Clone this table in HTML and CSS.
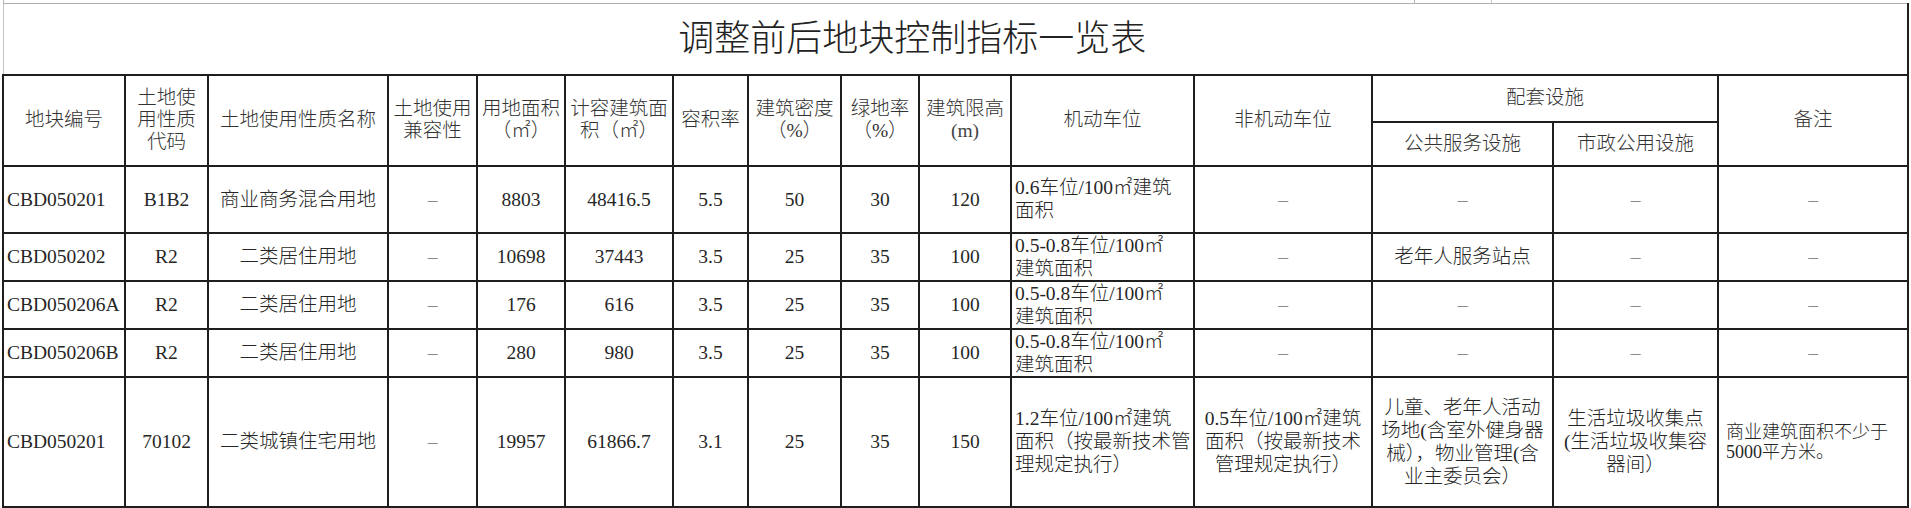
FILE: index.html
```html
<!DOCTYPE html>
<html lang="zh-CN">
<head>
<meta charset="utf-8">
<title>调整前后地块控制指标一览表</title>
<link rel="stylesheet" href="styles.css">
</head>
<body>
<div class="sheet">
  <div class="prev-strip">
    <span class="ps ps-a"></span><span class="ps ps-b"></span><span class="ps ps-c"></span>
  </div>
  <table class="grid">
    <colgroup>
      <col class="c-id"><col class="c-code"><col class="c-name"><col class="c-comp"><col class="c-area">
      <col class="c-gfa"><col class="c-far"><col class="c-dens"><col class="c-green"><col class="c-height">
      <col class="c-park"><col class="c-bike"><col class="c-pub"><col class="c-mun"><col class="c-note">
    </colgroup>
    <tr class="r-title">
      <td colspan="15" class="title">调整前后地块控制指标一览表</td>
    </tr>
    <tr class="r-h1">
      <th rowspan="2">地块编号</th>
      <th rowspan="2">土地使<br>用性质<br>代码</th>
      <th rowspan="2">土地使用性质名称</th>
      <th rowspan="2">土地使用<br>兼容性</th>
      <th rowspan="2">用地面积<br>（㎡）</th>
      <th rowspan="2">计容建筑面<br>积（㎡）</th>
      <th rowspan="2">容积率</th>
      <th rowspan="2">建筑密度<br>（%）</th>
      <th rowspan="2">绿地率<br>（%）</th>
      <th rowspan="2">建筑限高<br><span class="unit">(m)</span></th>
      <th rowspan="2">机动车位</th>
      <th rowspan="2">非机动车位</th>
      <th colspan="2">配套设施</th>
      <th rowspan="2">备注</th>
    </tr>
    <tr class="r-h2">
      <th>公共服务设施</th>
      <th>市政公用设施</th>
    </tr>
    <tr class="r-d1">
      <td class="left">CBD050201</td><td>B1B2</td><td>商业商务混合用地</td><td class="na">–</td><td>8803</td>
      <td>48416.5</td><td>5.5</td><td>50</td><td>30</td><td>120</td>
      <td class="left">0.6车位/100㎡建筑<br>面积</td><td class="na">–</td><td class="na">–</td><td class="na">–</td><td class="na">–</td>
    </tr>
    <tr class="r-d2">
      <td class="left">CBD050202</td><td>R2</td><td>二类居住用地</td><td class="na">–</td><td>10698</td>
      <td>37443</td><td>3.5</td><td>25</td><td>35</td><td>100</td>
      <td class="left">0.5-0.8车位/100㎡<br>建筑面积</td><td class="na">–</td><td>老年人服务站点</td><td class="na">–</td><td class="na">–</td>
    </tr>
    <tr class="r-d3">
      <td class="left">CBD050206A</td><td>R2</td><td>二类居住用地</td><td class="na">–</td><td>176</td>
      <td>616</td><td>3.5</td><td>25</td><td>35</td><td>100</td>
      <td class="left">0.5-0.8车位/100㎡<br>建筑面积</td><td class="na">–</td><td class="na">–</td><td class="na">–</td><td class="na">–</td>
    </tr>
    <tr class="r-d4">
      <td class="left">CBD050206B</td><td>R2</td><td>二类居住用地</td><td class="na">–</td><td>280</td>
      <td>980</td><td>3.5</td><td>25</td><td>35</td><td>100</td>
      <td class="left">0.5-0.8车位/100㎡<br>建筑面积</td><td class="na">–</td><td class="na">–</td><td class="na">–</td><td class="na">–</td>
    </tr>
    <tr class="r-d5">
      <td class="left">CBD050201</td><td>70102</td><td>二类城镇住宅用地</td><td class="na">–</td><td>19957</td>
      <td>61866.7</td><td>3.1</td><td>25</td><td>35</td><td>150</td>
      <td class="left">1.2车位/100㎡建筑<br>面积（按最新技术管<br>理规定执行）</td>
      <td>0.5车位/100㎡建筑<br>面积（按最新技术<br>管理规定执行）</td>
      <td>儿童、老年人活动<br>场地(含室外健身器<br>械），物业管理(含<br>业主委员会）</td>
      <td>生活垃圾收集点<br>(生活垃圾收集容<br>器间）</td>
      <td class="left note">商业建筑面积不少于<br>5000平方米。</td>
    </tr>
  </table>
</div>
</body>
</html>
```
FILE: styles.css
```css
html, body {
  margin: 0;
  padding: 0;
  background: #ffffff;
}

.sheet {
  width: 1911px;
  padding-left: 2px;
  box-sizing: border-box;
}

.prev-strip {
  display: flex;
  height: 3px;
}

.ps {
  display: block;
  height: 3px;
  border-left: 1px solid #b5b5b5;
}

.ps-a { width: 1410px; margin-left: 1px; }
.ps-b { width: 76px; }
.ps-c { flex: 1; border-left-color: #c8c8c8; }

.grid {
  border-collapse: collapse;
  table-layout: fixed;
  width: 1907px;
  font-family: "Liberation Serif", "Noto Sans CJK SC", serif;
  font-size: 19.5px;
  color: #262626;
}

.c-id { width: 122px; }
.c-code { width: 83px; }
.c-name { width: 180px; }
.c-comp { width: 89px; }
.c-area { width: 88px; }
.c-gfa { width: 108px; }
.c-far { width: 75px; }
.c-dens { width: 93px; }
.c-green { width: 78px; }
.c-height { width: 92px; }
.c-park { width: 183px; }
.c-bike { width: 178px; }
.c-pub { width: 181px; }
.c-mun { width: 165px; }
.c-note { width: 190px; }

.grid td,
.grid th {
  border: 2px solid #1e1e1e;
  padding: 0 2px;
  text-align: center;
  vertical-align: middle;
  font-weight: 300;
  line-height: 23px;
  white-space: nowrap;
  overflow: hidden;
}

.grid th {
  color: #333333;
  padding: 0;
  line-height: 22px;
}

.unit {
  font-weight: 400;
  color: #444444;
}

.grid td.title {
  font-size: 36px;
  line-height: 40px;
  color: #222222;
  padding: 0 86px 0 0;
  border-top: 1px solid #b0b0b0;
  border-left: 1px solid #c4c4c4;
}

.grid td.left {
  text-align: left;
  padding-left: 3px;
}

.grid td.na {
  color: #8a8a8a;
}

.grid td.note {
  font-size: 18px;
  line-height: 20px;
  padding-left: 7px;
}

.r-title { height: 71px; }
.r-h1 { height: 47px; }
.r-h2 { height: 44px; }
.r-d1 { height: 67px; }
.r-d2 { height: 46px; }
.r-d3 { height: 46px; }
.r-d4 { height: 45px; }
.r-d5 { height: 131px; }

.r-d5 td {
  border-bottom-width: 3px;
}
```
